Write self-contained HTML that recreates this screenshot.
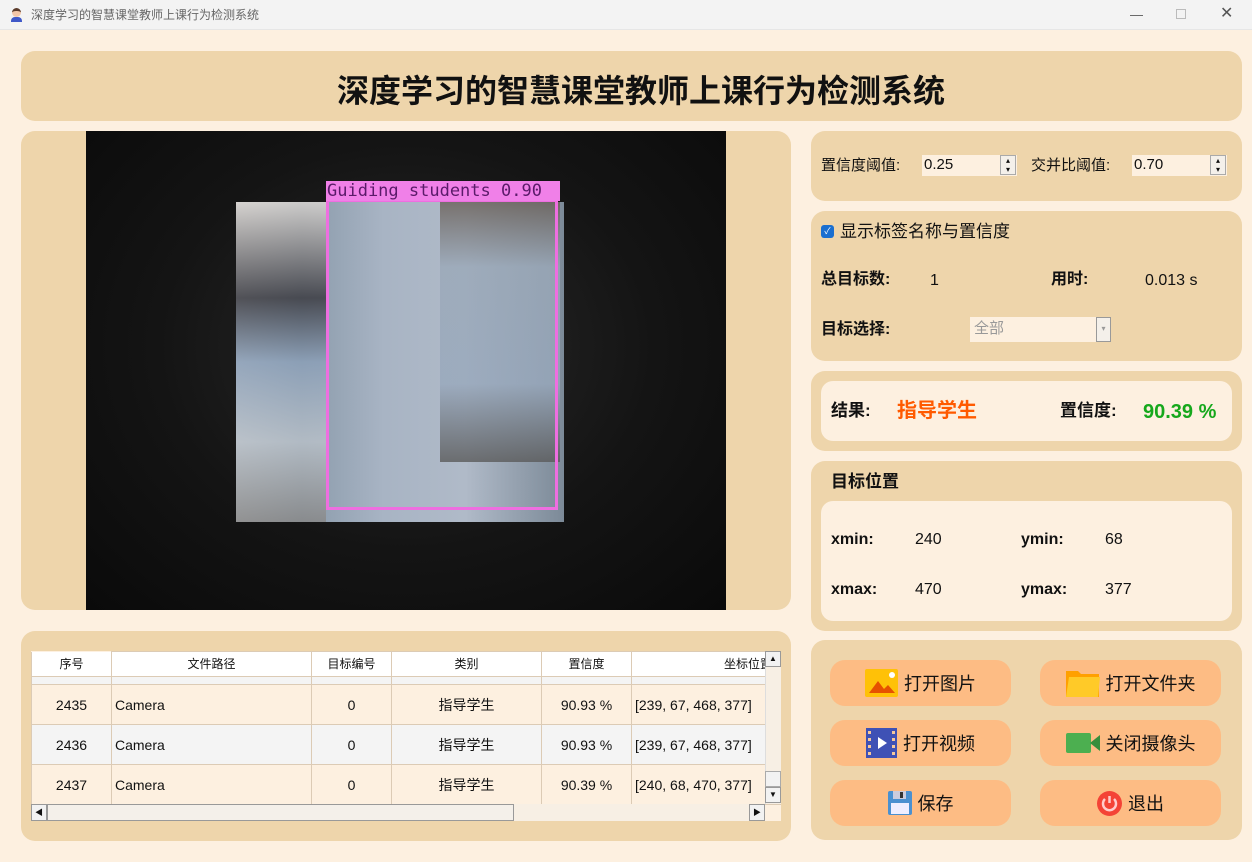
<!DOCTYPE html>
<html><head><meta charset="utf-8"><style>
*{margin:0;padding:0;box-sizing:border-box}
body{width:1252px;height:862px;position:relative;background:#fdf0e0;font-family:"Liberation Sans","Noto Sans CJK SC",sans-serif;overflow:hidden;color:#111}
.abs{position:absolute;line-height:20px;white-space:nowrap}
.panel{position:absolute;background:#eed5ab;border-radius:14px}
.inner{position:absolute;background:#fdf0e0;border-radius:12px}
.b{font-weight:bold}
.btn{position:absolute;width:181px;height:46px;background:#fdbc84;border-radius:15px;font-size:18px;display:flex;align-items:center;justify-content:center;gap:6px}
table{border-collapse:collapse;font-size:14px}
td{border:1px solid #dccbb5;text-align:center;padding:0;line-height:16px;overflow:hidden;white-space:nowrap}
tr.r td{height:40px}
</style></head><body>
<div class="abs" style="left:0;top:0;width:1252px;height:30px;background:#f3f3f3;border-bottom:1px solid #e6e6e6"></div>
<div class="abs" style="left:11px;top:8px;width:11px;height:15px"><div style="width:9px;height:9px;border-radius:50%;background:#f2c6a8;border-top:3px solid #5a3a2a;margin-left:1px"></div><div style="width:11px;height:5px;background:#3f58c8;border-radius:4px 4px 0 0"></div></div>
<div class="abs" style="left:31px;top:5px;font-size:12px;color:#666">深度学习的智慧课堂教师上课行为检测系统</div>
<div class="abs" style="left:1130px;top:5px;font-size:13px;color:#555">—</div>
<div class="abs" style="left:1176px;top:9px;width:10px;height:10px;border:1px solid #bbb"></div>
<div class="abs" style="left:1220px;top:4px;font-size:16px;color:#555">✕</div>

<div class="panel" style="left:21px;top:51px;width:1221px;height:70px"></div>
<div class="abs b" style="left:0;top:71px;width:1282px;text-align:center;font-size:32px;line-height:40px">深度学习的智慧课堂教师上课行为检测系统</div>

<div class="panel" style="left:21px;top:131px;width:770px;height:479px"></div>
<div class="abs" style="left:86px;top:131px;width:640px;height:479px;background:radial-gradient(ellipse at 50% 45%,#2a2a2a 0%,#141414 55%,#0a0a0a 100%)"></div>
<div class="abs" style="left:236px;top:202px;width:328px;height:320px;background:linear-gradient(90deg,#c9ccd0 0%,#8a9aaa 20%,#a8b4c4 45%,#b0bac8 70%,#7c8a98 100%)"></div>
<div class="abs" style="left:236px;top:202px;width:90px;height:320px;background:linear-gradient(180deg,#d8d4d0 0%,#3c3c42 30%,#8ca0b8 50%,#b8c0c8 75%,#888 100%);opacity:.85"></div>
<div class="abs" style="left:440px;top:202px;width:120px;height:260px;background:linear-gradient(180deg,#6a6058 0%,#9aa8b8 25%,#98a8bc 70%,#5a5a5a 100%);opacity:.8"></div>
<div class="abs" style="left:326px;top:199px;width:232px;height:311px;border:3px solid #ee6ee0"></div>
<div class="abs" style="left:326px;top:181px;width:234px;height:20px;background:#f080e8;color:#5b1a6a;font-family:'DejaVu Sans Mono',monospace;font-size:17px;line-height:20px;padding-left:1px;overflow:hidden">Guiding students 0.90</div>

<div class="panel" style="left:811px;top:131px;width:431px;height:70px"></div>
<div class="abs" style="left:821px;top:156px;font-size:15px">置信度阈值:</div>
<div class="abs" style="left:922px;top:155px;width:95px;height:21px;background:#fdf0e0;font-size:15px;padding-left:2px">0.25</div>
<div class="abs" style="left:1000px;top:155px;width:16px;height:20px;border:1px solid #aaa;background:#f4f0ea;font-size:8px;text-align:center;line-height:9px">▴<br>▾</div>
<div class="abs" style="left:1031px;top:156px;font-size:15px">交并比阈值:</div>
<div class="abs" style="left:1132px;top:155px;width:95px;height:21px;background:#fdf0e0;font-size:15px;padding-left:2px">0.70</div>
<div class="abs" style="left:1210px;top:155px;width:16px;height:20px;border:1px solid #aaa;background:#f4f0ea;font-size:8px;text-align:center;line-height:9px">▴<br>▾</div>

<div class="panel" style="left:811px;top:211px;width:431px;height:150px"></div>
<div class="abs" style="left:821px;top:225px;width:13px;height:13px;background:#1a6fd0;border-radius:3px;color:#fff;font-size:9px;text-align:center;line-height:13px">✓</div>
<div class="abs" style="left:840px;top:222px;font-size:17px">显示标签名称与置信度</div>
<div class="abs b" style="left:821px;top:270px;font-size:16px">总目标数:</div>
<div class="abs" style="left:930px;top:270px;font-size:16px;line-height:22px">1</div>
<div class="abs b" style="left:1051px;top:270px;font-size:16px">用时:</div>
<div class="abs" style="left:1145px;top:270px;font-size:16px;line-height:22px">0.013 s</div>
<div class="abs b" style="left:821px;top:320px;font-size:16px">目标选择:</div>
<div class="abs" style="left:970px;top:317px;width:141px;height:25px;background:#fdf0e0;color:#999;font-size:15px;padding:2px 4px">全部</div>
<div class="abs" style="left:1096px;top:317px;width:15px;height:25px;border:1px solid #999;background:#f4f0ea;color:#999;font-size:8px;text-align:center;line-height:22px">▾</div>

<div class="panel" style="left:811px;top:371px;width:431px;height:80px"></div>
<div class="inner" style="left:821px;top:381px;width:411px;height:60px"></div>
<div class="abs b" style="left:831px;top:401px;font-size:17px">结果:</div>
<div class="abs b" style="left:897px;top:401px;font-size:20px">
<span style="color:#ff5a00">指导学生</span></div>
<div class="abs b" style="left:1060px;top:401px;font-size:17px">置信度:</div>
<div class="abs b" style="left:1143px;top:401px;font-size:20px;line-height:22px;color:#16a81c">90.39 %</div>

<div class="panel" style="left:811px;top:461px;width:431px;height:170px"></div>
<div class="abs b" style="left:831px;top:472px;font-size:17px">目标位置</div>
<div class="inner" style="left:821px;top:501px;width:411px;height:120px"></div>
<div class="abs b" style="left:831px;top:530px;font-size:16px">xmin:</div>
<div class="abs" style="left:915px;top:530px;font-size:16px">240</div>
<div class="abs b" style="left:1021px;top:530px;font-size:16px">ymin:</div>
<div class="abs" style="left:1105px;top:530px;font-size:16px">68</div>
<div class="abs b" style="left:831px;top:580px;font-size:16px">xmax:</div>
<div class="abs" style="left:915px;top:580px;font-size:16px">470</div>
<div class="abs b" style="left:1021px;top:580px;font-size:16px">ymax:</div>
<div class="abs" style="left:1105px;top:580px;font-size:16px">377</div>

<div class="panel" style="left:811px;top:640px;width:431px;height:200px"></div>
<div class="btn" style="left:830px;top:660px"><svg width="33" height="28"><rect width="33" height="28" rx="2" fill="#ffc107"/><path d="M4 24L13 12L19 20L23 16L30 24Z" fill="#e65100"/><circle cx="27" cy="6" r="3" fill="#fff"/></svg>打开图片</div>
<div class="btn" style="left:1040px;top:660px"><svg width="34" height="28"><path d="M0 2h12l3 3h18v23H0Z" fill="#ffa000"/><path d="M3 8h31l-2 20H0Z" fill="#ffca28"/></svg>打开文件夹</div>
<div class="btn" style="left:830px;top:720px"><svg width="31" height="30"><rect width="31" height="30" fill="#3f51b5"/><g fill="#f5c89c"><rect x="2" y="3" width="3" height="3"/><rect x="2" y="10" width="3" height="3"/><rect x="2" y="17" width="3" height="3"/><rect x="2" y="24" width="3" height="3"/><rect x="26" y="3" width="3" height="3"/><rect x="26" y="10" width="3" height="3"/><rect x="26" y="17" width="3" height="3"/><rect x="26" y="24" width="3" height="3"/></g><path d="M12 9l9 6-9 6Z" fill="#fff"/></svg>打开视频</div>
<div class="btn" style="left:1040px;top:720px"><svg width="34" height="20"><rect width="25" height="20" rx="2" fill="#4caf50"/><path d="M24 10l10-8v16Z" fill="#388e3c"/></svg>关闭摄像头</div>
<div class="btn" style="left:830px;top:780px"><svg width="24" height="24"><rect width="24" height="24" rx="2" fill="#4a90d0"/><rect x="5" y="0" width="13" height="8" fill="#ccd"/><rect x="12" y="1" width="3" height="6" fill="#333"/><rect x="3" y="12" width="18" height="11" fill="#eef"/></svg>保存</div>
<div class="btn" style="left:1040px;top:780px"><svg width="25" height="25"><circle cx="12.5" cy="12.5" r="12.5" fill="#f44336"/><path d="M8 8a6.5 6.5 0 1 0 9 0" stroke="#fcc" stroke-width="2.5" fill="none"/><path d="M12.5 5v7" stroke="#fcc" stroke-width="2.5"/></svg>退出</div>

<div class="panel" style="left:21px;top:631px;width:770px;height:210px"></div>
<div class="abs" style="left:31px;top:651px;width:750px;height:170px;background:#fdf0e0;overflow:hidden">
<table style="position:absolute;left:0;top:0;width:800px;table-layout:fixed">
<colgroup><col style="width:80px"><col style="width:200px"><col style="width:80px"><col style="width:150px"><col style="width:90px"><col style="width:200px"></colgroup>
<tr style="background:#fff;font-size:12px"><td style="height:25px;border-top:none">序号</td><td style="height:25px">文件路径</td><td style="height:25px">目标编号</td><td style="height:25px">类别</td><td style="height:25px">置信度</td><td style="height:25px;text-align:left;padding-left:92px">坐标位置</td></tr>
<tr style="background:#f4f4f4"><td style="height:8px"></td><td style="height:8px"></td><td style="height:8px"></td><td style="height:8px"></td><td style="height:8px"></td><td style="height:8px"></td></tr>
<tr class="r"><td>2435</td><td style="text-align:left;padding-left:3px">Camera</td><td>0</td><td>指导学生</td><td>90.93 %</td><td style="text-align:left;padding-left:3px">[239, 67, 468, 377]</td></tr>
<tr class="r" style="background:#f4f4f4"><td>2436</td><td style="text-align:left;padding-left:3px">Camera</td><td>0</td><td>指导学生</td><td>90.93 %</td><td style="text-align:left;padding-left:3px">[239, 67, 468, 377]</td></tr>
<tr class="r"><td>2437</td><td style="text-align:left;padding-left:3px">Camera</td><td>0</td><td>指导学生</td><td>90.39 %</td><td style="text-align:left;padding-left:3px">[240, 68, 470, 377]</td></tr>
</table>
<div class="abs" style="left:734px;top:0;width:16px;height:153px;background:#f7efe4;border-left:1px solid #ddd"></div>
<div class="abs" style="left:734px;top:0;width:16px;height:16px;background:#f2f2f2;border:1px solid #999;font-size:8px;text-align:center;line-height:14px">▲</div>
<div class="abs" style="left:734px;top:120px;width:16px;height:16px;background:#f2f2f2;border:1px solid #aaa"></div>
<div class="abs" style="left:734px;top:136px;width:16px;height:16px;background:#f2f2f2;border:1px solid #999;font-size:8px;text-align:center;line-height:14px">▼</div>
<div class="abs" style="left:0;top:153px;width:734px;height:17px;background:#f7efe4"></div>
<div class="abs" style="left:0;top:153px;width:16px;height:17px;background:#f2f2f2;border:1px solid #999;font-size:8px;text-align:center;line-height:15px">◀</div>
<div class="abs" style="left:16px;top:153px;width:467px;height:17px;background:#f4f0ea;border:1px solid #999"></div>
<div class="abs" style="left:718px;top:153px;width:16px;height:17px;background:#f2f2f2;border:1px solid #999;font-size:8px;text-align:center;line-height:15px">▶</div>
</div>
</body></html>
